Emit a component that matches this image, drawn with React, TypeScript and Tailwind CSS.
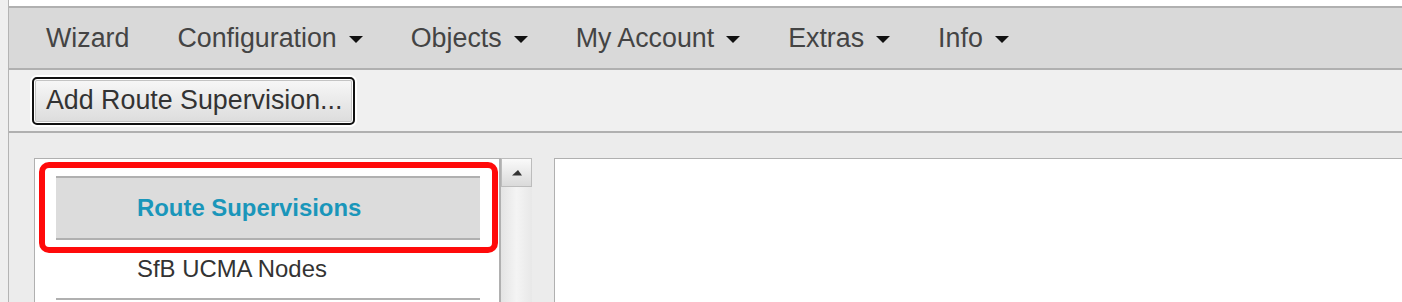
import { useState } from "react";

const menu = [
  { label: "Wizard", caret: false },
  { label: "Configuration", caret: true },
  { label: "Objects", caret: true },
  { label: "My Account", caret: true },
  { label: "Extras", caret: true },
  { label: "Info", caret: true },
];

const items = ["Route Supervisions", "SfB UCMA Nodes"];

export default function App() {
  const [selected, setSelected] = useState(0);

  return (
    <div className="flex h-[302px] w-full overflow-hidden bg-white font-['Liberation_Sans',Arial,sans-serif]">
      <div className="w-[9px] shrink-0 border-r border-[#b4b4b4] bg-[#efefef]" />
      <div className="flex min-w-0 flex-1 flex-col">
        <div className="h-[6px] shrink-0 bg-white" />

        {/* top menu */}
        <nav className="flex h-[64px] shrink-0 items-center border-y-2 border-[#b0b0b0] bg-[#d9d9d9] pl-[13px] text-[26.8px] text-[#444]">
          {menu.map((m) => (
            <div key={m.label} className="flex cursor-pointer items-center px-[24px]">
              <span>{m.label}</span>
              {m.caret && (
                <span className="ml-[12px] mt-[3px] h-0 w-0 border-x-[7px] border-t-[7px] border-x-transparent border-t-[#111]" />
              )}
            </div>
          ))}
        </nav>

        {/* toolbar */}
        <div className="flex h-[63px] shrink-0 items-center border-b-2 border-[#b0b0b0] bg-[#f0f0f0] pl-[23px]">
          <button className="h-[48px] w-[323px] rounded-[5px] border-2 border-[#111] bg-gradient-to-b from-[#f8f8f8] to-[#dcdcdc] pl-[12px] text-left text-[26.8px] text-[#333] shadow-[0_0_0_2px_#fff,inset_0_0_0_1px_#fff,inset_0_0_0_2px_#c4c4c4]">
            Add Route Supervision...
          </button>
        </div>

        {/* content */}
        <div className="flex flex-1 bg-[#ececec] pl-[25px] pt-[25px]">
          <div className="relative w-[467px] shrink-0 border-l border-r-2 border-t border-[#b0b0b0] bg-white pl-[21px] pr-[19px] pt-[17px]">
            {items.map((it, i) => (
              <div
                key={it}
                onClick={() => setSelected(i)}
                className={
                  i === selected
                    ? "flex h-[64px] cursor-pointer items-center border-y-2 border-[#b0b0b0] bg-[#dcdcdc] pl-[81px] text-[23.9px] font-bold text-[#1a96ba]"
                    : "flex h-[60px] cursor-pointer items-center border-b-2 border-[#b0b0b0] pl-[81px] text-[23.9px] text-[#333]"
                }
              >
                {it}
              </div>
            ))}
            <div className="pointer-events-none absolute left-[4px] top-[3px] h-[91px] w-[459px] rounded-[10px] border-[6px] border-[#ff0a0a]" />
          </div>

          {/* scrollbar */}
          <div className="flex w-[31px] shrink-0 flex-col">
            <div className="flex h-[29px] items-center justify-center border border-[#bcbcbc] bg-gradient-to-b from-[#fafafa] to-[#dadada]">
              <svg width="12" height="7" viewBox="0 0 12 7">
                <path d="M1 6.5 L7 1 L11 6.5 Z" fill="#333" />
              </svg>
            </div>
            <div className="flex-1 bg-gradient-to-r from-[#e4e4e4] via-[#f4f4f4] to-[#e8e8e8]" />
          </div>

          <div className="ml-[22px] flex-1 border-l border-t border-[#b0b0b0] bg-white" />
        </div>
      </div>
    </div>
  );
}
